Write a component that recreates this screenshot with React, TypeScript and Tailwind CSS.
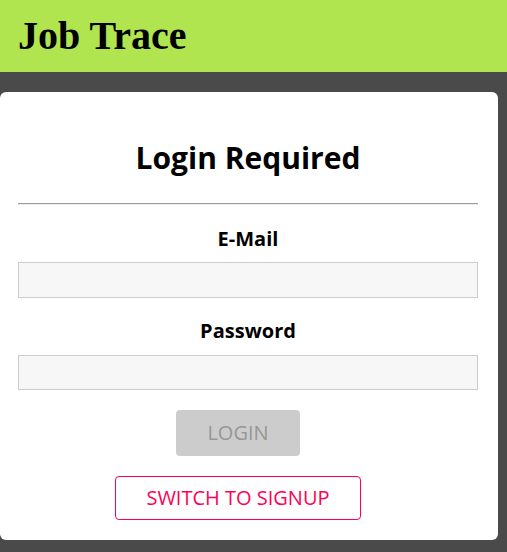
export default function App() {
  return (
    <div className="min-h-[552px] bg-[#4a4a4a] font-['Open_Sans',sans-serif]">
      {/* header */}
      <header className="h-[72px] bg-[#b1e54f] flex items-center px-[18px]">
        <h1 className="font-['Liberation_Serif',serif] font-bold text-[40px] leading-none text-black">
          Job Trace
        </h1>
      </header>

      {/* card */}
      <main className="pt-5">
        <div className="w-[498px] bg-white rounded-md pl-[18px] pr-5 pt-[46px] pb-5">
          <h2 className="text-[30px] font-bold text-center leading-[40px] text-black">
            Login Required
          </h2>
          <hr className="mt-[25px] border-t border-b border-t-[#9a9a9a] border-b-[#eee]" />

          <div className="mt-5 flex flex-col items-center">
            <label className="text-[20px] font-bold leading-[28px] text-black">E-Mail</label>
            <input
              type="email"
              className="mt-[9px] w-full h-[36px] bg-[#f7f7f7] border border-[#ccc] outline-none"
            />
            <label className="mt-[19px] text-[20px] font-bold leading-[28px] text-black">Password</label>
            <input
              type="password"
              className="mt-[10px] w-full h-[35px] bg-[#f7f7f7] border border-[#ccc] outline-none"
            />
          </div>

          {/* actions */}
          <div className="mt-5 pr-5 flex flex-col items-center">
            <button
              disabled
              className="w-[124px] h-[46px] rounded bg-[#ccc] text-[#979797] text-[20px] uppercase"
            >
              Login
            </button>
            <button className="mt-5 w-[246px] h-[44px] rounded border border-[#ff0055] text-[#ff0055] text-[20px] uppercase bg-white">
              Switch to Signup
            </button>
          </div>
        </div>
      </main>
    </div>
  );
}
